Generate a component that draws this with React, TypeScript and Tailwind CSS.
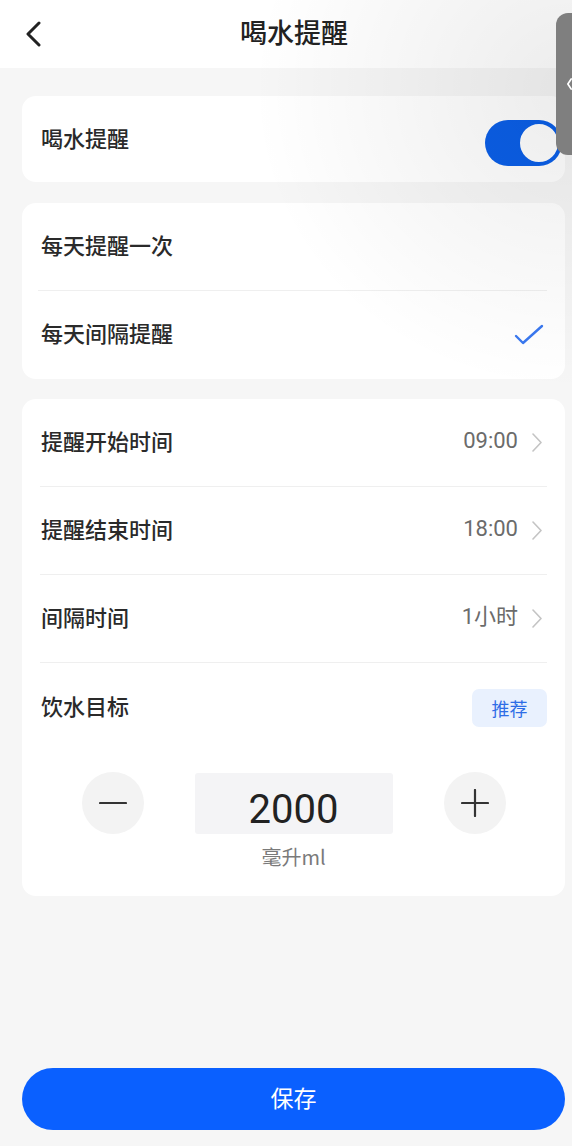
import React from "react";

const font = { fontFamily: '"Noto Sans CJK SC", "Noto Sans", sans-serif' };
const numFont = { fontFamily: 'Roboto, "Noto Sans CJK SC", sans-serif' };

function Chevron() {
  return (
    <svg width="10" height="19" viewBox="0 0 10 19" fill="none" className="ml-[14px] mt-[4px]">
      <path d="M1 1 L9 9.5 L1 18" stroke="#c4c4c4" strokeWidth="1.6" strokeLinecap="round" strokeLinejoin="round" />
    </svg>
  );
}

function SettingRow({ label, value, last }: { label: string; value: string; last?: boolean }) {
  return (
    <div className="relative flex h-[88px] items-center pb-[5px] pl-[19px] pr-[23px]">
      <span className="text-[22px] font-medium text-[#2a2a2a]">{label}</span>
      <div className="ml-auto flex items-center">
        <span className="text-[22px] text-[#6b6b6b]" style={numFont}>{value}</span>
        <Chevron />
      </div>
      {!last && <div className="absolute bottom-0 left-[18px] right-[18px] h-px bg-[#efefef]" />}
    </div>
  );
}

export default function App() {
  return (
    <div className="relative flex h-[1146px] w-[572px] flex-col overflow-hidden bg-[#f6f6f6]" style={font}>
      {/* header */}
      <div className="flex h-[68px] items-center bg-white pb-[4px] pl-[22px] pr-[6px]">
        <div className="flex w-[60px] items-center">
          <svg width="18" height="26" viewBox="0 0 18 26" fill="none" className="ml-[2px] mt-[4px]">
            <path d="M15 2 L4 13 L15 24" stroke="#222" strokeWidth="3" strokeLinecap="round" strokeLinejoin="round" />
          </svg>
        </div>
        <div className="flex-1 text-center text-[27px] font-medium text-[#222]">喝水提醒</div>
        <div className="w-[60px]" />
      </div>

      <div className="flex flex-1 flex-col pl-[22px] pr-[7px]">
        {/* card 1 */}
        <div className="mt-[28px] flex h-[86px] items-center rounded-[14px] bg-white pl-[19px] pr-[3px]">
          <span className="mb-[4px] text-[22px] font-medium text-[#2a2a2a]">喝水提醒</span>
          <div className="ml-auto mt-[8px] flex h-[46px] w-[77px] items-center justify-end rounded-full bg-[#0b5fe8] pr-[2px]">
            <div className="h-[42px] w-[42px] rounded-full border-[2px] border-[#0b5fe8] bg-white" />
          </div>
        </div>

        {/* card 2 */}
        <div className="mt-[21px] flex flex-col rounded-[14px] bg-white">
          <div className="relative flex h-[88px] items-center pb-[5px] pl-[19px]">
            <span className="text-[22px] font-medium text-[#2a2a2a]">每天提醒一次</span>
            <div className="absolute bottom-0 left-[16px] right-[18px] h-px bg-[#efefef]" />
          </div>
          <div className="flex h-[88px] items-center pb-[5px] pl-[19px] pr-[21px]">
            <span className="text-[22px] font-medium text-[#2a2a2a]">每天间隔提醒</span>
            <svg width="30" height="22" viewBox="0 0 30 22" fill="none" className="ml-auto mt-[5px]">
              <path d="M2 12 L9 19 L28 2" stroke="#3a78f0" strokeWidth="2.4" strokeLinecap="round" strokeLinejoin="round" />
            </svg>
          </div>
        </div>

        {/* card 3 */}
        <div className="mt-[20px] flex flex-col rounded-[14px] bg-white">
          <SettingRow label="提醒开始时间" value="09:00" />
          <SettingRow label="提醒结束时间" value="18:00" />
          <SettingRow label="间隔时间" value="1小时" />
          <div className="flex h-[90px] items-center pl-[19px] pr-[18px]">
            <span className="mb-[5px] text-[22px] font-medium text-[#2a2a2a]">饮水目标</span>
            <div className="ml-auto flex h-[38px] w-[75px] items-center justify-center rounded-[7px] bg-[#e9f1fe] text-[18px] text-[#2e6de6]">
              推荐
            </div>
          </div>
          <div className="flex flex-col items-center pb-[24px] pt-[19px]">
            <div className="flex items-center gap-[51px]">
              <div className="flex h-[62px] w-[62px] items-center justify-center rounded-full bg-[#f3f3f3]">
                <svg width="28" height="4" viewBox="0 0 28 4"><path d="M1 2 H27" stroke="#333" strokeWidth="2.2" strokeLinecap="round" /></svg>
              </div>
              <div className="flex h-[61px] w-[198px] items-center justify-center rounded-[3px] bg-[#f4f4f6] pt-[14px] text-[40px] text-[#222]" style={numFont}>
                2000
              </div>
              <div className="flex h-[62px] w-[62px] items-center justify-center rounded-full bg-[#f3f3f3]">
                <svg width="28" height="28" viewBox="0 0 28 28"><path d="M1 14 H27 M14 1 V27" stroke="#333" strokeWidth="2.2" strokeLinecap="round" /></svg>
              </div>
            </div>
            <div className="mt-[8px] text-[20px] text-[#7a7a7a]">毫升ml</div>
          </div>
        </div>

        {/* save */}
        <div className="mt-auto mb-[16px] flex h-[62px] items-center justify-center rounded-full bg-[#0a60ff] pb-[3px] text-[23px] text-white">
          保存
        </div>
      </div>

      {/* right-top shading */}
      <div className="pointer-events-none absolute inset-0 bg-[radial-gradient(ellipse_320px_300px_at_100%_90px,rgba(0,0,0,0.075),rgba(0,0,0,0))]" />

      {/* floating side tab */}
      <div className="absolute right-0 top-[13px] flex h-[142px] w-[16px] items-center rounded-l-[12px] bg-[#7f7f7f] pl-[11px]">
        <svg width="6" height="14" viewBox="0 0 6 14"><path d="M5 1 L1 7 L5 13" stroke="#fff" strokeWidth="2" fill="none" strokeLinecap="round" /></svg>
      </div>
    </div>
  );
}
